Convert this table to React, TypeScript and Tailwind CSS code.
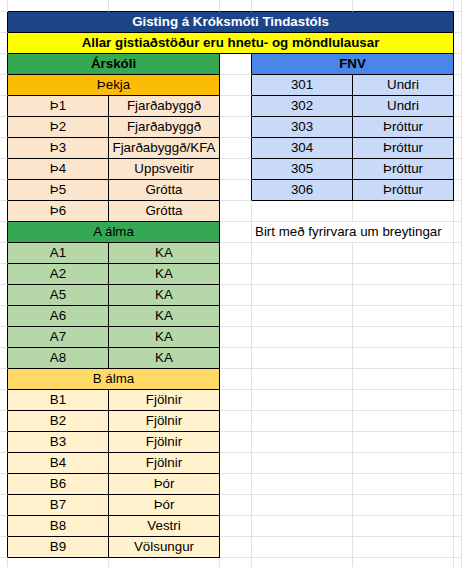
import React from "react";

type Cell = {
  span: number;
  text?: string;
  bg?: string;
  bold?: boolean;
  table?: boolean;
  left?: boolean;
  white?: boolean;
};

const pair = (a: string, b: string, bg: string): Cell[] => [
  { span: 1, text: a, bg, table: true },
  { span: 1, text: b, bg, table: true },
];

const empty = (n: number): Cell[] => Array.from({ length: n }, () => ({ span: 1 }));

const thorRows: [string, string][] = [
  ["Þ1", "Fjarðabyggð"],
  ["Þ2", "Fjarðabyggð"],
  ["Þ3", "Fjarðabyggð/KFA"],
  ["Þ4", "Uppsveitir"],
  ["Þ5", "Grótta"],
  ["Þ6", "Grótta"],
];
const fnv: [string, string][] = [
  ["301", "Undri"],
  ["302", "Undri"],
  ["303", "Þróttur"],
  ["304", "Þróttur"],
  ["305", "Þróttur"],
  ["306", "Þróttur"],
];
const aRows: [string, string][] = [
  ["A1", "KA"],
  ["A2", "KA"],
  ["A5", "KA"],
  ["A6", "KA"],
  ["A7", "KA"],
  ["A8", "KA"],
];
const bRows: [string, string][] = [
  ["B1", "Fjölnir"],
  ["B2", "Fjölnir"],
  ["B3", "Fjölnir"],
  ["B4", "Fjölnir"],
  ["B6", "Þór"],
  ["B7", "Þór"],
  ["B8", "Vestri"],
  ["B9", "Völsungur"],
];

// rows cover columns 1..5 (column 0 and 6 are margin columns added automatically)
function buildRows(): Cell[][] {
  const rows: Cell[][] = [];
  rows.push(empty(5)); // r0
  rows.push([{ span: 5, text: "Gisting á Króksmóti Tindastóls", bg: "bg-[#1c4587]", bold: true, table: true, white: true }]);
  rows.push([{ span: 5, text: "Allar gistiaðstöður eru hnetu- og möndlulausar", bg: "bg-[#ffff00]", bold: true, table: true }]);
  rows.push([
    { span: 2, text: "Árskóli", bg: "bg-[#34a853]", bold: true, table: true },
    { span: 1 },
    { span: 2, text: "FNV", bg: "bg-[#4a86e8]", bold: true, table: true },
  ]);
  // r4: Þekja + 301
  rows.push([
    { span: 2, text: "Þekja", bg: "bg-[#fbbc04]", table: true },
    { span: 1 },
    ...pair(fnv[0][0], fnv[0][1], "bg-[#c9daf8]"),
  ]);
  for (let i = 0; i < 6; i++) {
    const right: Cell[] =
      i + 1 < 6 ? pair(fnv[i + 1][0], fnv[i + 1][1], "bg-[#c9daf8]") : i === 5 ? empty(2) : empty(2);
    rows.push([...pair(thorRows[i][0], thorRows[i][1], "bg-[#fce5cd]"), { span: 1 }, ...right]);
  }
  // r11: A álma + Birt
  rows.push([
    { span: 2, text: "A álma", bg: "bg-[#34a853]", table: true },
    { span: 1 },
    { span: 2, text: "Birt með fyrirvara um breytingar", left: true },
  ]);
  aRows.forEach(([a, b]) => rows.push([...pair(a, b, "bg-[#b6d7a8]"), ...empty(3)]));
  rows.push([{ span: 2, text: "B álma", bg: "bg-[#ffd966]", table: true }, ...empty(3)]);
  bRows.forEach(([a, b]) => rows.push([...pair(a, b, "bg-[#fff2cc]"), ...empty(3)]));
  rows.push(empty(5));
  // add margin columns
  return rows.map((r) => [{ span: 1 }, ...r, { span: 1 }]);
}

const spanClass: Record<number, string> = {
  1: "col-span-1",
  2: "col-span-2",
  5: "col-span-5",
};

export default function App() {
  const rows = buildRows();
  // occupancy map: table flag per (r,c)
  const occ: boolean[][] = rows.map((r) => {
    const arr: boolean[] = [];
    r.forEach((c) => {
      for (let i = 0; i < c.span; i++) arr.push(!!c.table);
    });
    return arr;
  });

  const items: React.ReactNode[] = [];
  rows.forEach((row, ri) => {
    let col = 0;
    row.forEach((cell, ci) => {
      const start = col;
      const end = col + cell.span - 1;
      col += cell.span;
      const rightTable = !!cell.table || (end + 1 < 7 && occ[ri][end + 1]);
      let bottomTable = !!cell.table;
      if (!bottomTable && ri + 1 < rows.length) {
        for (let c = start; c <= end; c++) if (occ[ri + 1][c]) bottomTable = true;
      }
      items.push(
        <div
          key={`${ri}-${ci}`}
          className={[
            spanClass[cell.span],
            "border-r border-b flex items-end pb-[2px] px-[3px] overflow-visible whitespace-nowrap leading-[16px]",
            rightTable ? "border-r-black" : "border-r-[#e2e2e2]",
            bottomTable ? "border-b-black" : "border-b-[#e2e2e2]",
            cell.bg ?? "bg-white",
            cell.left ? "justify-start" : "justify-center",
            cell.bold ? "font-bold" : "font-normal",
            cell.white ? "text-white" : "text-black",
          ].join(" ")}
        >
          {cell.text ?? ""}
        </div>
      );
    });
  });

  return (
    <div className="w-[462px] h-[567px] overflow-hidden bg-white">
      <div className="grid grid-cols-[8px_101px_111px_32px_101px_101px_8px] grid-rows-[12px_repeat(26,21px)_12px] font-['Liberation_Sans',Arial,sans-serif] text-[13.333px]">
        {items}
      </div>
    </div>
  );
}
